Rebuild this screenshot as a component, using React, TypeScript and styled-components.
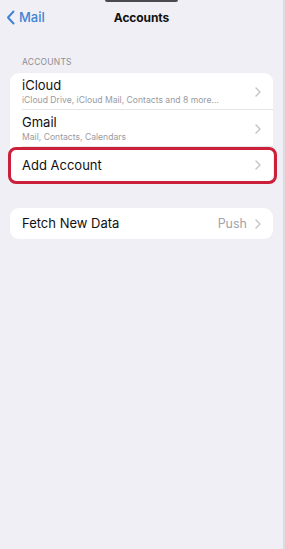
import React from "react";
import styled, { createGlobalStyle } from "styled-components";

const Global = createGlobalStyle`
  html, body { margin: 0; padding: 0; background: #f0eff5; }
  body { font-family: Inter, "Noto Sans", "Liberation Sans", sans-serif; -webkit-font-smoothing: antialiased; }
`;

const Screen = styled.div`
  width: 285px;
  height: 549px;
  background: #f0eff5;
  position: relative;
  overflow: hidden;
  border-right: 2px solid #dcdce0;
  box-sizing: border-box;
`;

const Notch = styled.div`
  position: absolute;
  top: 0;
  left: 105px;
  width: 73px;
  height: 2px;
  background: #4a4a4e;
  border-radius: 0 0 2px 2px;
`;

const NavBar = styled.div`
  height: 34px;
  display: grid;
  grid-template-columns: 1fr auto 1fr;
  align-items: center;
  padding: 0 6px;
`;

const Back = styled.div`
  display: flex;
  align-items: center;
  gap: 4px;
  color: #3d85d4;
  font-size: 13px;
  font-weight: 500;
`;

const Title = styled.div`
  font-size: 12px;
  font-weight: 700;
  color: #111;
  letter-spacing: -0.1px;
`;

const SectionHeader = styled.div`
  margin: 23px 0 0 22px;
  font-size: 8.5px;
  color: #8d8d92;
  letter-spacing: 0.2px;
  line-height: 10px;
`;

const Card = styled.div<{ $mt: number }>`
  margin: ${(p) => p.$mt}px 10px 0 10px;
  background: #ffffff;
  border-radius: 9px;
`;

const Row = styled.div<{ $h: number; $sep?: boolean; $highlight?: boolean }>`
  position: relative;
  height: ${(p) => p.$h}px;
  display: flex;
  align-items: center;
  padding: 0 12px 0 12px;
  box-sizing: border-box;
  ${(p) =>
    p.$sep
      ? `&::before { content: ""; position: absolute; left: 12px; right: 0; bottom: 0; height: 1px; background: #e6e6ea; }`
      : ""}
  ${(p) =>
    p.$highlight
      ? `&::after { content: ""; position: absolute; left: -2px; right: -4px; top: 0; bottom: -1px; border: 3.5px solid #cb1f3a; border-radius: 8px; }`
      : ""}
`;

const Texts = styled.div`
  flex: 1;
  display: flex;
  flex-direction: column;
  gap: 2px;
  min-width: 0;
`;

const Label = styled.div`
  font-size: 13px;
  color: #111;
  line-height: 15px;
`;

const Sub = styled.div`
  font-size: 8.6px;
  color: #9a9a9f;
  line-height: 10px;
  white-space: nowrap;
`;

const Value = styled.div`
  font-size: 12.5px;
  color: #a3a3a8;
  margin-right: 8px;
`;

const Chevron = () => (
  <svg width="6" height="10" viewBox="0 0 6 10" style={{ flexShrink: 0 }}>
    <path d="M1 1 L5 5 L1 9" fill="none" stroke="#c4c4c8" strokeWidth="1.4" strokeLinecap="round" strokeLinejoin="round" />
  </svg>
);

export default function App() {
  return (
    <Screen>
      <Global />
      <Notch />
      <NavBar>
        <Back>
          <svg width="9" height="15" viewBox="0 0 9 15">
            <path d="M7.5 1.5 L2 7.5 L7.5 13.5" fill="none" stroke="#3d85d4" strokeWidth="2" strokeLinecap="round" strokeLinejoin="round" />
          </svg>
          <span>Mail</span>
        </Back>
        <Title>Accounts</Title>
        <div />
      </NavBar>
      <SectionHeader>ACCOUNTS</SectionHeader>
      <Card $mt={6}>
        <Row $h={37} $sep>
          <Texts>
            <Label>iCloud</Label>
            <Sub>iCloud Drive, iCloud Mail, Contacts and 8 more...</Sub>
          </Texts>
          <Chevron />
        </Row>
        <Row $h={37} $sep>
          <Texts>
            <Label>Gmail</Label>
            <Sub>Mail, Contacts, Calendars</Sub>
          </Texts>
          <Chevron />
        </Row>
        <Row $h={36} $highlight>
          <Texts>
            <Label>Add Account</Label>
          </Texts>
          <Chevron />
        </Row>
      </Card>
      <Card $mt={25}>
        <Row $h={31}>
          <Texts>
            <Label>Fetch New Data</Label>
          </Texts>
          <Value>Push</Value>
          <Chevron />
        </Row>
      </Card>
    </Screen>
  );
}
